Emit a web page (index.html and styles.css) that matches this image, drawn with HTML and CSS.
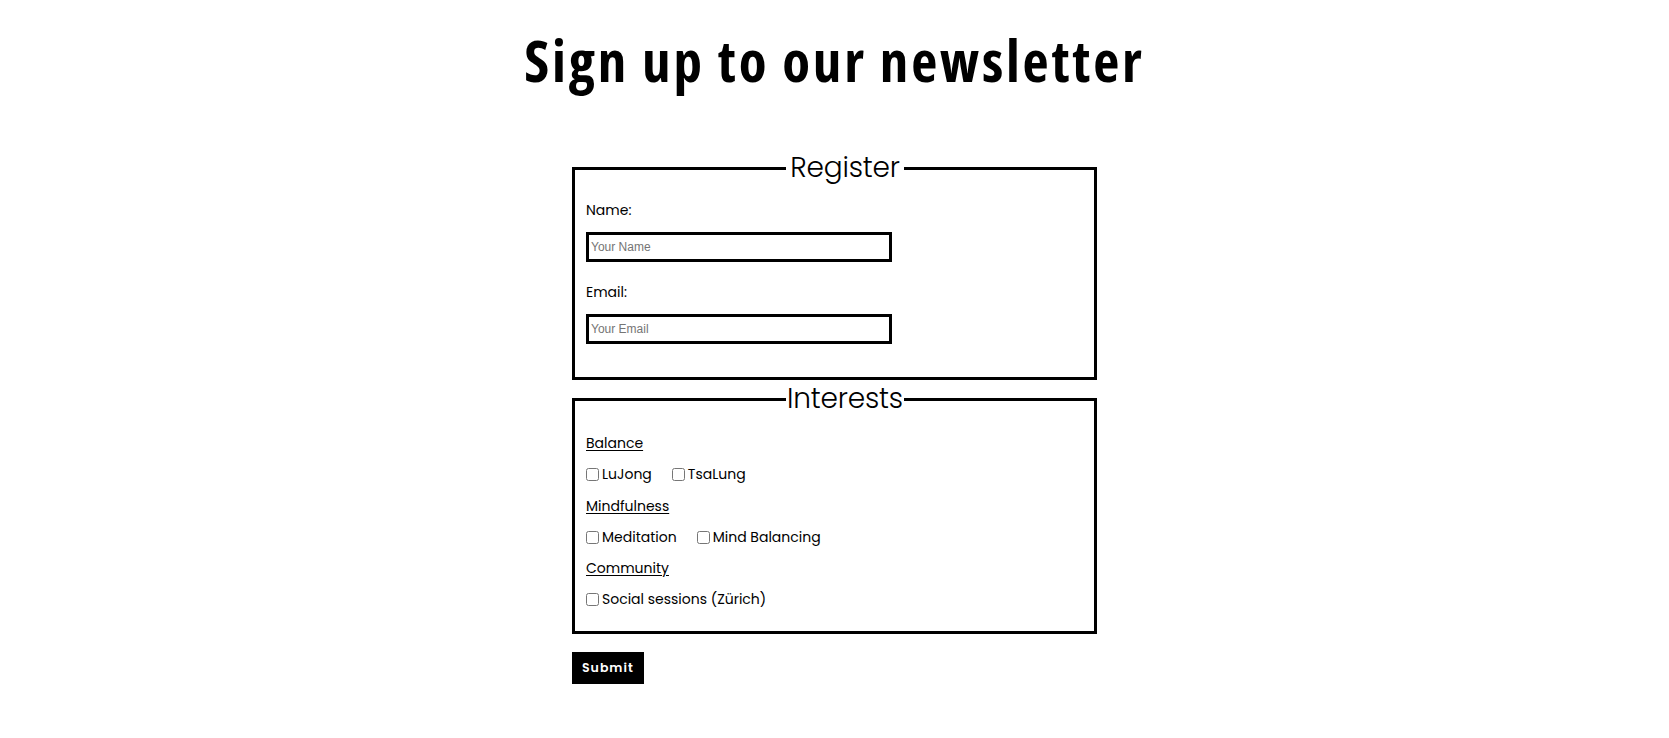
FILE: index.html
```html
<!DOCTYPE html>
<html lang="en">
<head>
<meta charset="utf-8">
<title>Newsletter</title>
<link rel="stylesheet" href="styles.css">
</head>
<body>
<h1 class="title">Sign up to our newsletter</h1>
<form class="signup">
  <fieldset class="box">
    <legend class="box-legend"><span class="legend-text">Register</span></legend>
    <label class="field-label" for="name">Name:</label>
    <input class="text-input" id="name" type="text" placeholder="Your Name">
    <label class="field-label" for="email">Email:</label>
    <input class="text-input text-input-last" id="email" type="email" placeholder="Your Email">
  </fieldset>
  <fieldset class="box box-interests">
    <legend class="box-legend"><span class="legend-text">Interests</span></legend>
    <div class="group-title">Balance</div>
    <div class="options">
      <label class="option"><input class="check" type="checkbox">LuJong</label>
      <label class="option"><input class="check" type="checkbox">TsaLung</label>
    </div>
    <div class="group-title">Mindfulness</div>
    <div class="options">
      <label class="option"><input class="check" type="checkbox">Meditation</label>
      <label class="option"><input class="check" type="checkbox">Mind Balancing</label>
    </div>
    <div class="group-title">Community</div>
    <div class="options options-last">
      <label class="option"><input class="check" type="checkbox">Social sessions (Zürich)</label>
    </div>
  </fieldset>
  <button class="submit" type="submit">Submit</button>
</form>
</body>
</html>
```
FILE: styles.css
```css
html, body {
  margin: 0;
  padding: 0;
  background: #ffffff;
}

body {
  font-family: "Poppins", "Inter", "Noto Sans", sans-serif;
  color: #000;
}

.title {
  margin: 21px 0 0;
  text-align: center;
  font-family: "Open Sans", "Liberation Sans", sans-serif;
  font-stretch: 75%;
  font-weight: 700;
  font-size: 57px;
  letter-spacing: 2.8px;
  line-height: normal;
}

.signup {
  width: 527px;
  margin: 52px auto 0;
  padding-left: 2px;
}

.box {
  box-sizing: border-box;
  display: block;
  width: 525px;
  margin: 0;
  border: 3px solid #000;
  padding: 15px 11px 30px;
}

.box-interests {
  margin-top: 2px;
  padding-top: 17px;
  padding-bottom: 21px;
}

.box-legend {
  box-sizing: border-box;
  width: 118px;
  margin-left: 200px;
  padding: 0;
  font-size: 28px;
  line-height: 34px;
  font-weight: 300;
  letter-spacing: -0.2px;
}

.legend-text {
  display: block;
  text-align: center;
}

.field-label {
  display: block;
  font-size: 14px;
  line-height: 21px;
}

.text-input {
  display: block;
  box-sizing: border-box;
  width: 306px;
  height: 30px;
  margin: 11px 0 20px;
  border: 3px solid #000;
  padding: 1px 2px;
  font-family: "Liberation Sans", Arial, sans-serif;
  font-size: 12px;
  outline: none;
}

.text-input-last {
  margin-bottom: 3px;
}

.group-title {
  font-size: 14px;
  line-height: 21px;
  text-decoration: underline;
  text-underline-offset: 2px;
  margin-bottom: 10.25px;
}

.options {
  display: flex;
  gap: 20px;
  font-size: 14px;
  line-height: 21px;
  margin-bottom: 10.25px;
}

.options-last {
  margin-bottom: 0;
}

.option {
  display: flex;
  align-items: center;
}

.check {
  width: 13px;
  height: 13px;
  margin: 0 3px 0 0;
}

.submit {
  display: block;
  margin-top: 18px;
  background: #000;
  color: #fff;
  border: none;
  padding: 8px 10px;
  font-family: "Poppins", "Inter", sans-serif;
  font-size: 12.5px;
  font-weight: 600;
  line-height: 16px;
  letter-spacing: 1px;
  cursor: pointer;
}
```
